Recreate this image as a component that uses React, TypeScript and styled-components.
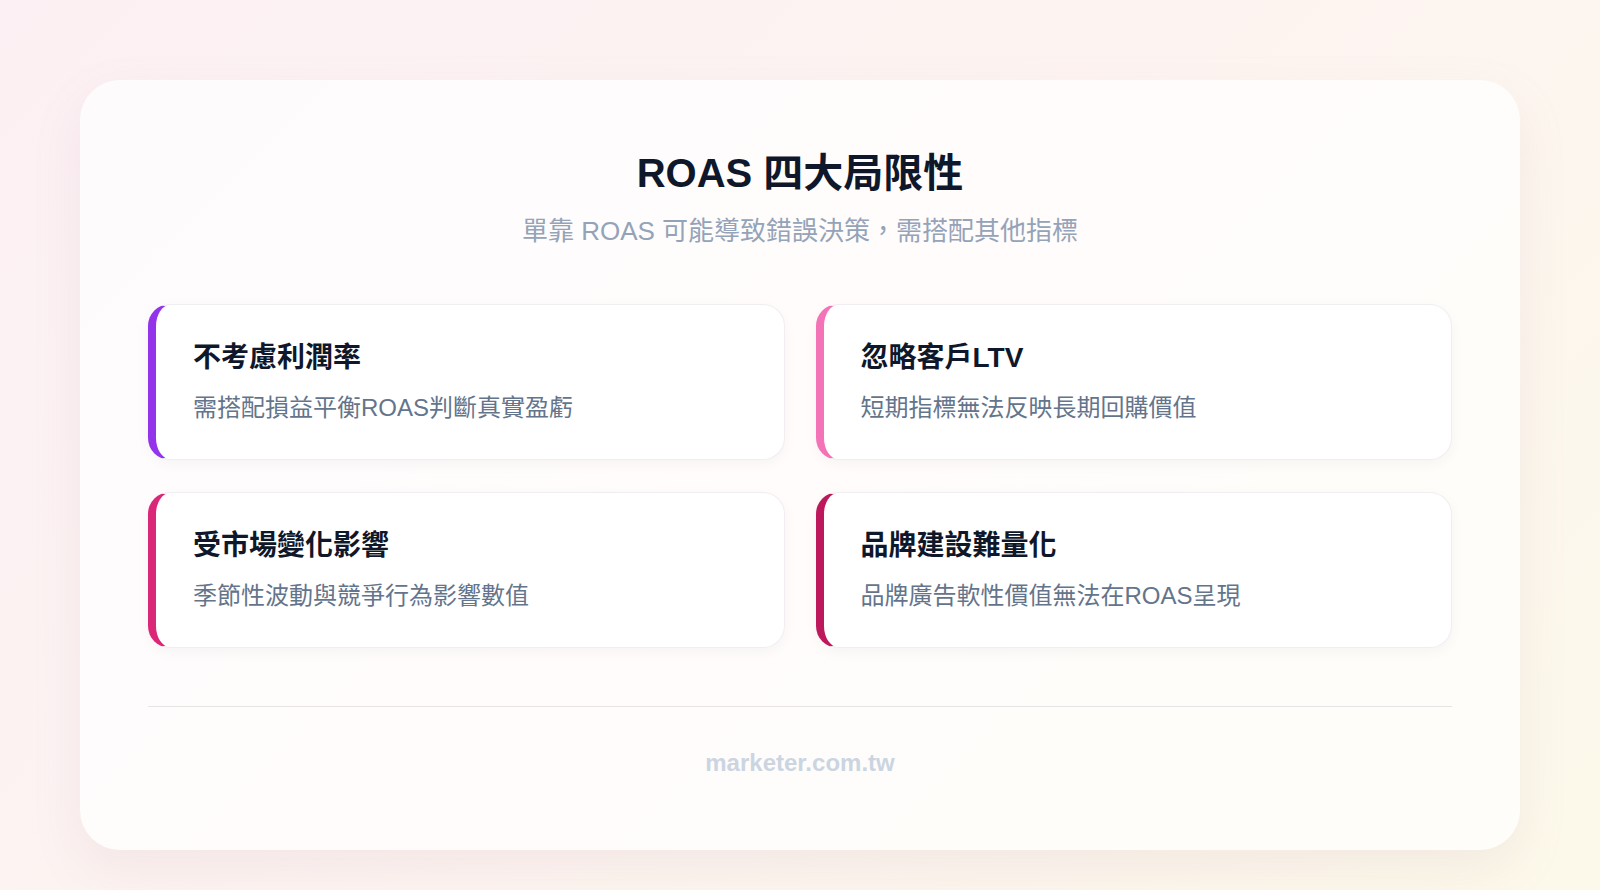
import styled, { createGlobalStyle } from 'styled-components';

const GlobalStyle = createGlobalStyle`
  html, body { margin: 0; padding: 0; }
  body {
    font-family: "Liberation Sans", "Noto Sans CJK TC", sans-serif;
    background: linear-gradient(135deg, #fcf0f4 0%, #fdf4f1 50%, #fcf9ea 100%);
    min-height: 890px;
  }
`;

const items = [
  { title: '不考慮利潤率', desc: '需搭配損益平衡ROAS判斷真實盈虧', color: '#9333ea' },
  { title: '忽略客戶LTV', desc: '短期指標無法反映長期回購價值', color: '#f472b6' },
  { title: '受市場變化影響', desc: '季節性波動與競爭行為影響數值', color: '#db2777' },
  { title: '品牌建設難量化', desc: '品牌廣告軟性價值無法在ROAS呈現', color: '#be185d' },
];

export default function App() {
  return (
    <>
      <GlobalStyle />
      <Page>
        <Panel>
          <Title>ROAS 四大局限性</Title>
          <Subtitle>單靠 ROAS 可能導致錯誤決策，需搭配其他指標</Subtitle>
          <Grid>
            {items.map((it) => (
              <Card key={it.title} $accent={it.color}>
                <CardTitle>{it.title}</CardTitle>
                <CardDesc>{it.desc}</CardDesc>
              </Card>
            ))}
          </Grid>
          <Divider />
          <Footer>marketer.com.tw</Footer>
        </Panel>
      </Page>
    </>
  );
}

const Page = styled.div`
  height: 890px;
  padding: 80px;
  box-sizing: border-box;
`;

const Panel = styled.div`
  height: 770px;
  box-sizing: border-box;
  padding: 68px 68px 0;
  border-radius: 40px;
  background: rgba(255, 255, 255, 0.72);
  box-shadow: 0 20px 50px rgba(180, 140, 160, 0.12);
  display: flex;
  flex-direction: column;
  align-items: center;
`;

const Title = styled.h1`
  margin: 0;
  font-size: 40px;
  font-weight: 700;
  color: #0f172a;
  line-height: 50px;
`;

const Subtitle = styled.p`
  margin: 16px 0 0;
  font-size: 26px;
  color: #94a3b8;
  line-height: 34px;
`;

const Grid = styled.div`
  margin-top: 56px;
  width: 100%;
  display: grid;
  grid-template-columns: 1fr 1fr;
  gap: 32px 31px;
`;

const Card = styled.div<{ $accent: string }>`
  height: 156px;
  box-sizing: border-box;
  padding: 35px 40px 0 37px;
  background: #fff;
  border-radius: 22px;
  border: 1px solid #f1eef1;
  border-left: 8px solid ${({ $accent }) => $accent};
  box-shadow: 0 4px 14px rgba(0, 0, 0, 0.04);
`;

const CardTitle = styled.div`
  font-size: 28px;
  font-weight: 700;
  color: #0f172a;
  line-height: 36px;
`;

const CardDesc = styled.div`
  margin-top: 16px;
  font-size: 24px;
  color: #64748b;
  line-height: 32px;
`;

const Divider = styled.div`
  width: 100%;
  height: 1px;
  background: #e8e4e6;
  margin-top: 58px;
`;

const Footer = styled.div`
  margin-top: 42px;
  font-size: 24px;
  font-weight: 700;
  color: #cbd5e1;
`;
